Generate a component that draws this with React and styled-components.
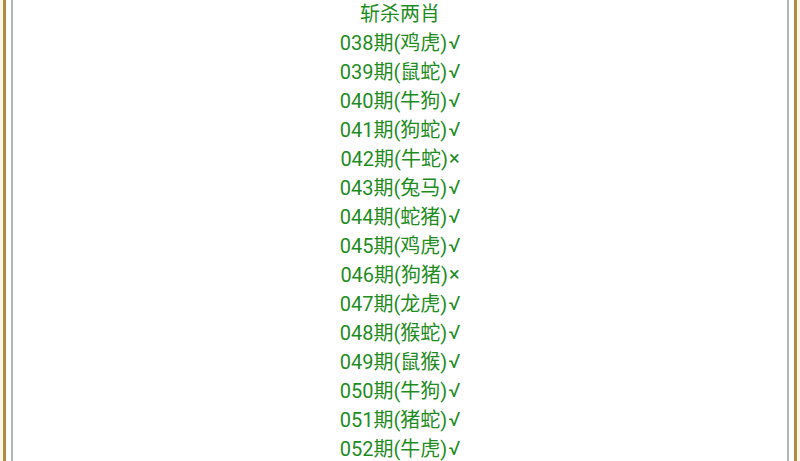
import React from 'react'
import styled, {createGlobalStyle} from 'styled-components'

const GlobalStyle = createGlobalStyle`
  html, body {
    margin: 0;
    padding: 0;
    background: #fbf6ec;
  }
  body {
    font-family: Roboto, "Noto Sans CJK SC", sans-serif;
  }
`

const rows = [
    ['038', '鸡虎', '√'],
    ['039', '鼠蛇', '√'],
    ['040', '牛狗', '√'],
    ['041', '狗蛇', '√'],
    ['042', '牛蛇', '×'],
    ['043', '兔马', '√'],
    ['044', '蛇猪', '√'],
    ['045', '鸡虎', '√'],
    ['046', '狗猪', '×'],
    ['047', '龙虎', '√'],
    ['048', '猴蛇', '√'],
    ['049', '鼠猴', '√'],
    ['050', '牛狗', '√'],
    ['051', '猪蛇', '√'],
    ['052', '牛虎', '√'],
]

function App() {
    return (
        <>
        <GlobalStyle/>
        <Page>
            <GoldFrame>
                <GrayFrame>
                    <List>
                        <Line>斩杀两肖</Line>
                        {rows.map(r => (
                            <Line key={r[0]}>{r[0]}期({r[1]})<Mark>{r[2]}</Mark></Line>
                        ))}
                    </List>
                </GrayFrame>
            </GoldFrame>
        </Page>
        </>
    )
}

const Page = styled.div`
    height: 461px;
    overflow: hidden;
    padding: 0 3px;
    display: flex;
`

const GoldFrame = styled.div`
    flex: 1;
    display: flex;
    background: #fff;
    border-left: 3px solid #b38d3f;
    border-right: 3px solid #b38d3f;
    padding: 0 5px;
`

const GrayFrame = styled.div`
    flex: 1;
    border-left: 2px solid #b4b4b4;
    border-right: 2px solid #b4b4b4;
    background: #fff;
`

const List = styled.div`
    margin-top: -2px;
    display: flex;
    flex-direction: column;
    align-items: center;
`

const Line = styled.div`
    height: 29px;
    display: flex;
    align-items: center;
    font-size: 20px;
    color: #1f8c1f;
    white-space: nowrap;
`

const Mark = styled.span`
    font-family: Roboto, "DejaVu Sans", sans-serif;
    font-size: 20px;
    margin-left: 1px;
`

export default App
